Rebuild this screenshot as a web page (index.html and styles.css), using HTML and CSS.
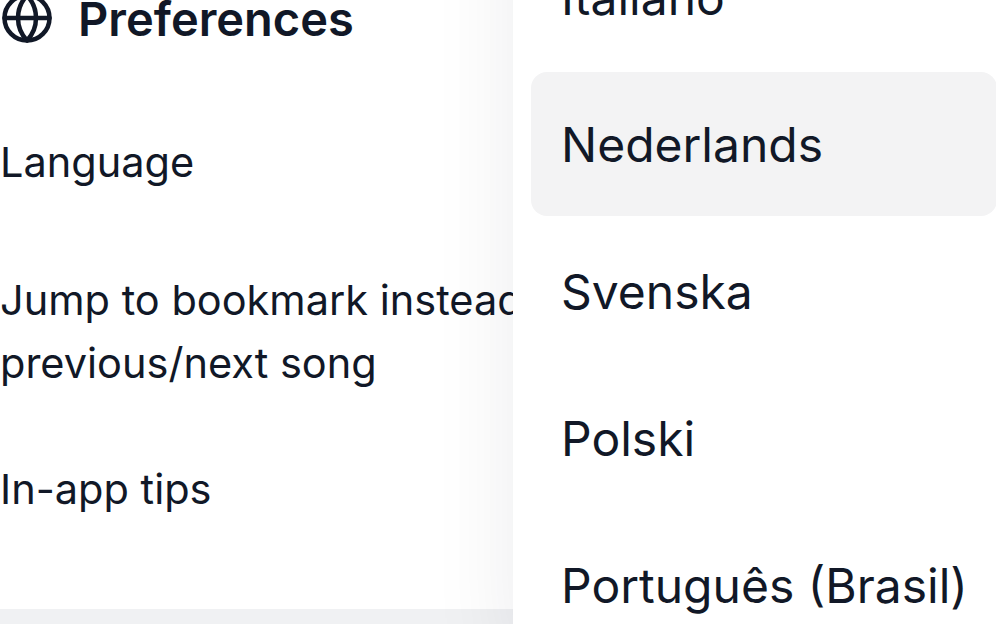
FILE: index.html
```html
<!DOCTYPE html>
<html>
<head>
    <title>Preferences</title>
    <link rel="stylesheet" href="styles.css">
</head>
<body>
    <div class="page">
        <section class="settings">
            <h2 class="settings-title">
                <svg class="globe" viewBox="0 0 24 24" fill="none" stroke="currentColor" stroke-width="2" stroke-linecap="round" stroke-linejoin="round">
                    <circle cx="12" cy="12" r="10"></circle>
                    <path d="M12 2a14.5 14.5 0 0 0 0 20 14.5 14.5 0 0 0 0-20"></path>
                    <path d="M2 12h20"></path>
                </svg>
                <span class="settings-label">Preferences</span>
            </h2>
            <div class="setting setting-language">Language</div>
            <div class="setting setting-jump">Jump to bookmark instead of previous/next song</div>
            <div class="setting setting-tips">In-app tips</div>
        </section>
        <div class="footer-band"></div>

        <ul class="menu">
            <li class="menu-item">Italiano</li>
            <li class="menu-item active">Nederlands</li>
            <li class="menu-item">Svenska</li>
            <li class="menu-item">Polski</li>
            <li class="menu-item">Português (Brasil)</li>
        </ul>
    </div>
</body>
</html>
```

FILE: styles.css
```css
:root {
    --text: #111827;
    --hover: #f3f3f4;
    --band: #f0f1f3;
}

html, body {
    margin: 0;
    padding: 0;
    height: 624px;
    overflow: hidden;
    background: #fff;
}

body {
    font-family: Inter, 'Liberation Sans', sans-serif;
    color: var(--text);
}

.page {
    position: relative;
    display: flex;
    flex-direction: column;
    height: 624px;
    overflow: hidden;
}

.settings {
    flex: 1;
    margin-top: -11px;
}

.settings-title {
    display: flex;
    align-items: center;
    gap: 24px;
    margin: 0;
    font-size: 47px;
    font-weight: 600;
    line-height: 56px;
}

.settings-label {
    padding-top: 2px;
}

.globe {
    width: 54px;
    height: 54px;
    flex-shrink: 0;
}

.setting {
    width: 640px;
    font-size: 41.5px;
    line-height: 63px;
}

.setting-language {
    margin-top: 84px;
}

.setting-jump {
    margin-top: 75px;
}

.setting-tips {
    margin-top: 63px;
}

.footer-band {
    height: 15px;
    background: var(--band);
}

/* dropdown sits over the settings, running off the window */
.menu {
    position: absolute;
    top: -93px;
    left: 513px;
    width: 484px;
    margin: 0;
    padding: 18px 0 0 18px;
    list-style: none;
    background: #fff;
    box-sizing: border-box;
    height: 760px;
    box-shadow: 0 0 80px rgba(17, 24, 39, 0.08);
}

.menu-item {
    display: flex;
    align-items: center;
    height: 144px;
    margin-bottom: 3px;
    padding-left: 30px;
    font-size: 48px;
    border-radius: 16px;
}

.menu-item.active {
    background: var(--hover);
}
```
